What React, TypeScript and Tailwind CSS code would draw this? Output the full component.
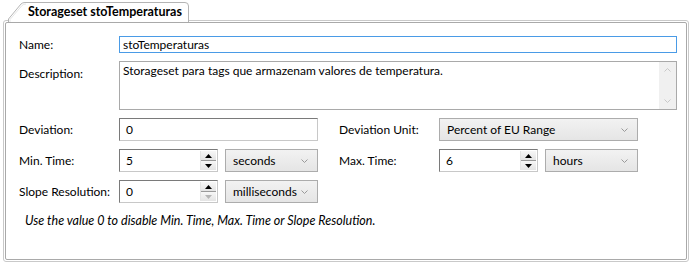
import React from "react";

const font = { fontFamily: "Lato, 'Noto Sans', sans-serif" };

function Chevron({ up = false, color = "#8a8a8a" }: { up?: boolean; color?: string }) {
  return (
    <svg width="7" height="4" viewBox="0 0 7 4" className="block">
      <path
        d={up ? "M0.5 3.5 L3.5 0.5 L6.5 3.5" : "M0.5 0.5 L3.5 3.5 L6.5 0.5"}
        fill="none"
        stroke={color}
        strokeWidth="1"
      />
    </svg>
  );
}

function Select({ value, width }: { value: string; width: string }) {
  return (
    <div
      className={`${width} h-[23px] flex items-center justify-between pl-[7px] pr-[9px] border border-[#acacac] bg-gradient-to-b from-[#f2f2f2] to-[#e5e5e5] text-[12px] text-black`}
    >
      <span>{value}</span>
      <Chevron color="#9a9a9a" />
    </div>
  );
}

function Spinner({ value, downDisabled = false }: { value: string; downDisabled?: boolean }) {
  return (
    <div className="w-[99px] h-[23px] flex items-stretch border border-[#c8c8c8] border-t-[#7a7a7a] border-l-[#7a7a7a] bg-white">
      <div className="flex-1 flex items-center pl-[6px] text-[12px]">{value}</div>
      <div className="w-[16px] my-[1px] mr-[1px] flex flex-col border-l border-[#e4e4e4]">
        <div className="flex-1 flex items-center justify-center bg-gradient-to-b from-[#f7f7f7] to-[#e4e4e4] border-b border-[#9a9a9a]">
          <svg width="7" height="4" viewBox="0 0 7 4">
            <path d="M0 4 L3.5 0 L7 4 Z" fill="#000" />
          </svg>
        </div>
        <div className="flex-1 flex items-center justify-center bg-gradient-to-b from-[#f7f7f7] to-[#e4e4e4]">
          <svg width="7" height="4" viewBox="0 0 7 4">
            <path d="M0 0 L3.5 4 L7 0 Z" fill={downDisabled ? "#b5b5b5" : "#000"} />
          </svg>
        </div>
      </div>
    </div>
  );
}

function Label({ text, className = "" }: { text: string; className?: string }) {
  return <div className={`w-[100px] shrink-0 text-[12px] text-black ${className}`}>{text}</div>;
}

export default function App() {
  return (
    <div className="w-[692px] h-[265px] bg-white overflow-hidden" style={font}>
      {/* Tab */}
      <div className="relative h-[21px] ml-[8px] w-[184px] z-10">
        <svg className="absolute inset-0" width="184" height="22" viewBox="0 0 184 22">
          <path
            d="M0.5 22 L0.5 19 L13 4 Q14.5 2.5 17 2.5 L177 2.5 Q180.5 2.5 180.5 6 L180.5 22"
            fill="#fff"
            stroke="#b4b4b4"
          />
          <path d="M2 22 L2 19.5 L14 5.5 Q15.5 4 18 4" fill="none" stroke="#e6e6e6" />
        </svg>
        <div className="absolute left-[20px] top-[3px] text-[12.5px] font-bold text-black leading-[17px]">
          Storageset stoTemperaturas
        </div>
      </div>

      {/* Panel */}
      <div className="mx-[3px] -mt-[1px] w-[686px] h-[242px] border border-[#c9c9c9] rounded-[3px] p-[1px]">
        <div className="h-full border border-[#a9a9a9] rounded-[2px] pl-[13px] pr-[9px] pt-[13px]">
          {/* Name */}
          <div className="flex items-center h-[17px]">
            <Label text="Name:" />
            <div className="flex-1 h-[17px] border border-[#4a9be6] flex items-center pl-[3px] text-[12px]">
              stoTemperaturas
            </div>
          </div>

          {/* Description */}
          <div className="flex mt-[8px]">
            <Label text="Description:" className="pt-[4px]" />
            <div className="flex-1 h-[49px] border border-[#a9a9a9] flex">
              <div className="flex-1 pl-[3px] pt-[1px] text-[12px] leading-[16px]">
                Storageset para tags que armazenam valores de temperatura.
              </div>
              <div className="w-[17px] bg-[#f0f0f0] flex flex-col items-center justify-between py-[6px]">
                <Chevron up color="#c8c8c8" />
                <Chevron color="#c8c8c8" />
              </div>
            </div>
          </div>

          {/* Deviation */}
          <div className="flex items-center mt-[8px]">
            <Label text="Deviation:" />
            <div className="w-[199px] h-[23px] border border-[#c8c8c8] border-t-[#7a7a7a] border-l-[#7a7a7a] flex items-center pl-[6px] text-[12px]">
              0
            </div>
            <Label text="Deviation Unit:" className="ml-[21px]" />
            <Select value="Percent of EU Range" width="w-[199px]" />
          </div>

          {/* Min / Max Time */}
          <div className="flex items-center mt-[8px]">
            <Label text="Min. Time:" />
            <Spinner value="5" />
            <div className="ml-[7px]">
              <Select value="seconds" width="w-[93px]" />
            </div>
            <Label text="Max. Time:" className="ml-[21px]" />
            <Spinner value="6" />
            <div className="ml-[7px]">
              <Select value="hours" width="w-[93px]" />
            </div>
          </div>

          {/* Slope */}
          <div className="flex items-center mt-[8px]">
            <Label text="Slope Resolution:" />
            <Spinner value="0" downDisabled />
            <div className="ml-[7px]">
              <Select value="milliseconds" width="w-[93px]" />
            </div>
          </div>

          <div className="mt-[9px] pl-[6px] text-[12.5px] italic text-black">
            Use the value 0 to disable Min. Time, Max. Time or Slope Resolution.
          </div>
        </div>
      </div>
    </div>
  );
}
